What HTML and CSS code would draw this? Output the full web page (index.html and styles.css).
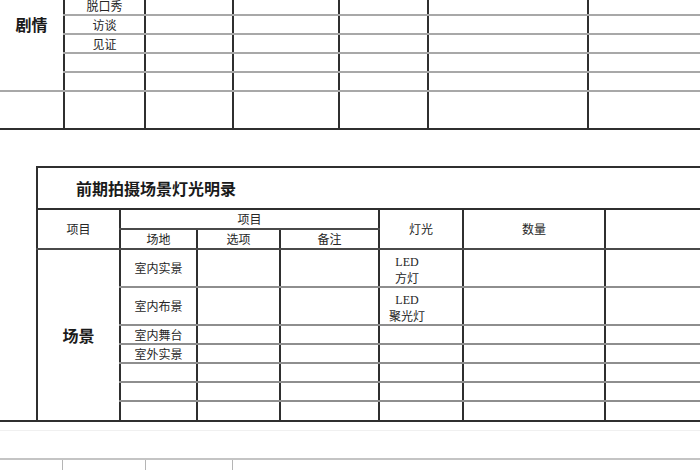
FILE: index.html
```html
<!DOCTYPE html>
<html lang="zh">
<head>
<meta charset="utf-8">
<title>前期拍摄场景灯光明录</title>
<link rel="stylesheet" href="styles.css">
</head>
<body>
<div class="page">
  <table class="t1">
    <colgroup>
      <col style="width:64px"><col style="width:81px"><col style="width:88px"><col style="width:106px"><col style="width:89px"><col style="width:160px"><col style="width:232px">
    </colgroup>
    <tr><td class="cat" rowspan="7">剧情</td><td class="sub"></td><td></td><td></td><td></td><td></td><td></td></tr>
    <tr><td class="sub"></td><td></td><td></td><td></td><td></td><td></td></tr>
    <tr><td class="sub">脱口秀</td><td></td><td></td><td></td><td></td><td></td></tr>
    <tr><td class="sub">访谈</td><td></td><td></td><td></td><td></td><td></td></tr>
    <tr><td class="sub">见证</td><td></td><td></td><td></td><td></td><td></td></tr>
    <tr><td class="sub"></td><td></td><td></td><td></td><td></td><td></td></tr>
    <tr><td class="sub"></td><td></td><td></td><td></td><td></td><td></td></tr>
    <tr class="tall"><td class="first"></td><td></td><td></td><td></td><td></td><td></td><td></td></tr>
  </table>
  <div class="rule"></div>

  <div class="gap"></div>

  <table class="t2">
    <colgroup>
      <col style="width:83px"><col style="width:77px"><col style="width:83px"><col style="width:99px"><col style="width:84px"><col style="width:142px"><col style="width:150px">
    </colgroup>
    <tr class="title-row"><td class="title" colspan="7">前期拍摄场景灯光明录</td></tr>
    <tr class="hrow"><td rowspan="2" class="hd">项目</td><td colspan="3" class="hd">项目</td><td rowspan="2" class="hd">灯光</td><td rowspan="2" class="hd">数量</td><td rowspan="2" class="hd"></td></tr>
    <tr class="hrow"><td class="hd">场地</td><td class="hd">选项</td><td class="hd">备注</td></tr>
    <tr class="big"><td class="cat" rowspan="7">场景</td><td class="sub">室内实景</td><td></td><td></td><td class="light"><span class="en">LED</span><br>方灯</td><td></td><td></td></tr>
    <tr class="big"><td class="sub">室内布景</td><td></td><td></td><td class="light"><span class="en">LED</span><br>聚光灯</td><td></td><td></td></tr>
    <tr class="sm"><td class="sub">室内舞台</td><td></td><td></td><td></td><td></td><td></td></tr>
    <tr class="sm"><td class="sub">室外实景</td><td></td><td></td><td></td><td></td><td></td></tr>
    <tr class="sm"><td class="sub"></td><td></td><td></td><td></td><td></td><td></td></tr>
    <tr class="sm"><td class="sub"></td><td></td><td></td><td></td><td></td><td></td></tr>
    <tr class="sm last"><td class="sub"></td><td></td><td></td><td></td><td></td><td></td></tr>
  </table>
  <div class="rule"></div>
  <div class="faint"></div>

  <table class="t3">
    <colgroup>
      <col style="width:62px"><col style="width:83px"><col style="width:87px"><col style="width:600px">
    </colgroup>
    <tr><td></td><td></td><td></td><td></td></tr>
  </table>
</div>
</body>
</html>
```
FILE: styles.css
```css
html, body {
  margin: 0;
  padding: 0;
  background: #fff;
}
body {
  width: 700px;
  height: 470px;
  overflow: hidden;
  font-family: "Noto Sans CJK SC", "Noto Sans", sans-serif;
  color: #262626;
}
.page {
  width: 900px;
}
table {
  border-collapse: collapse;
  table-layout: fixed;
}
td {
  padding: 0;
  font-size: 12px;
  line-height: 14px;
  text-align: center;
  vertical-align: middle;
}

/* top table */
.t1 {
  width: 820px;
  margin-top: -42px;
}
.t1 tr {
  height: 19px;
}
.t1 td {
  border-left: 2px solid #2f2f2f;
  border-bottom: 2px solid #a8a8a8;
}
.t1 td.cat {
  border-left: none;
  border-bottom: 2px solid #a8a8a8;
}
.t1 tr.tall {
  height: 37px;
}
.t1 tr.tall td {
  border-bottom: none;
}
.t1 td.first {
  border-left: none;
}
.cat {
  font-size: 16px;
  font-weight: bold;
  color: #1a1a1a;
}
.rule {
  height: 2px;
  background: #2f2f2f;
}
.gap {
  height: 36px;
}

/* middle table */
.t2 {
  width: 718px;
  margin-left: 36px;
}
.t2 td {
  border-left: 2px solid #2f2f2f;
  border-bottom: 2px solid #8e8e8e;
}
.t2 td.title {
  border-top: 2px solid #2f2f2f;
  border-bottom: 2px solid #2f2f2f;
  height: 40px;
  text-align: left;
  padding-left: 38px;
  font-size: 16px;
  font-weight: bold;
  color: #1a1a1a;
}
.t2 tr.hrow {
  height: 20px;
}
.t2 td.hd {
  border-bottom: 2px solid #4a4a4a;
}
.t2 tr.big {
  height: 38px;
}
.t2 tr.sm {
  height: 19px;
}
.t2 tr.last td {
  border-bottom: none;
}
.t2 td.cat {
  border-bottom: none;
}
.t2 td.sub {
  line-height: 16px;
}
.t2 td.light {
  vertical-align: top;
  padding: 3px 28px 0 0;
  line-height: 16px;
}
.en {
  font-family: "Liberation Serif", serif;
}
.faint {
  height: 1px;
  margin-top: 8px;
  background: #f0f0f0;
}

/* bottom table */
.t3 {
  width: 832px;
  margin-top: 27px;
}
.t3 td {
  height: 14px;
  border-top: 2px solid #c4c4c4;
  border-left: 1px solid #b5b5b5;
}
.t3 td:first-child {
  border-left: none;
}
```
